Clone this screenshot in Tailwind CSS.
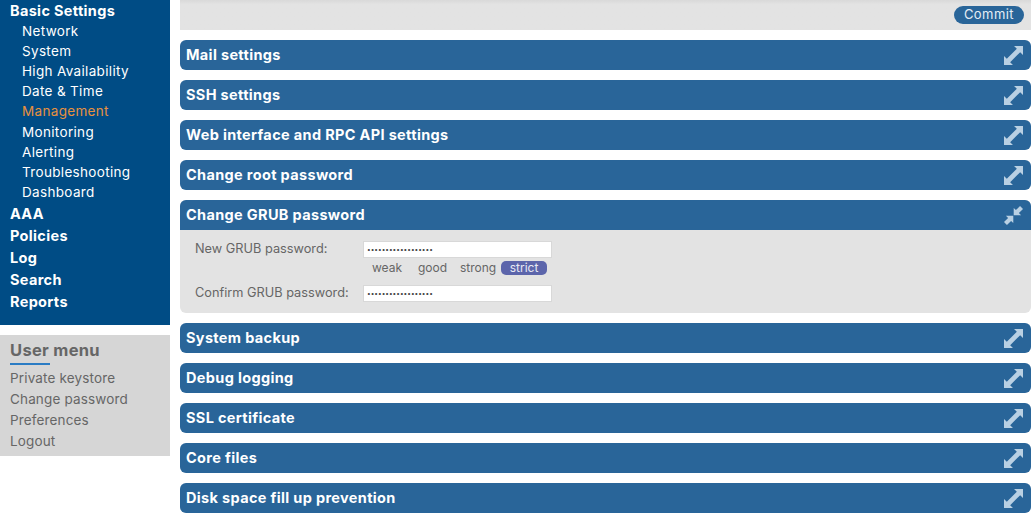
<!DOCTYPE html>
<html lang="en">
<head>
    <meta charset="UTF-8">
    <title>Management</title>
    <script src="https://cdn.jsdelivr.net/npm/@tailwindcss/browser@4"></script>
</head>
<body class="h-[513px] overflow-hidden bg-white font-['Inter','Noto_Sans',sans-serif] text-[13.5px] text-[#666]">
<div class="flex items-start gap-[10px]">
    <!-- Sidebar -->
    <aside class="w-[170px] shrink-0">
        <nav class="h-[325px] bg-[#004c85] pl-[10px] tracking-[0.33px] text-white">
            <div class="flex h-[21.1px] items-center text-[14.5px] font-bold">Basic Settings</div>
            <ul class="mb-[0.7px] pl-3">
                <li class="flex h-[20.1px] items-center">Network</li>
                <li class="flex h-[20.1px] items-center">System</li>
                <li class="flex h-[20.1px] items-center">High Availability</li>
                <li class="flex h-[20.1px] items-center">Date &amp; Time</li>
                <li class="flex h-[20.1px] items-center text-[#e8913f]">Management</li>
                <li class="mt-[0.2px] flex h-[20.1px] items-center">Monitoring</li>
                <li class="flex h-[20.1px] items-center">Alerting</li>
                <li class="flex h-[20.1px] items-center">Troubleshooting</li>
                <li class="flex h-[20.1px] items-center">Dashboard</li>
            </ul>
            <div class="flex h-[22px] items-center text-[14.5px] font-bold">AAA</div>
            <div class="flex h-[22px] items-center text-[14.5px] font-bold">Policies</div>
            <div class="flex h-[22px] items-center text-[14.5px] font-bold">Log</div>
            <div class="flex h-[22px] items-center text-[14.5px] font-bold">Search</div>
            <div class="flex h-[22px] items-center text-[14.5px] font-bold">Reports</div>
        </nav>
        <div class="mt-[10px] h-[121px] bg-[#d6d6d6] pt-[5px]">
            <div class="ml-[10px] flex h-[20px] items-center text-[16.5px] font-bold tracking-[0.3px]">User menu</div>
            <div class="ml-[10px] mt-[3px] h-[2px] w-[40px] bg-[#2a7cc4]"></div>
            <ul class="mt-[3px] pl-[10px] tracking-[0.15px]">
                <li class="flex h-[21px] items-center">Private keystore</li>
                <li class="flex h-[21px] items-center">Change password</li>
                <li class="flex h-[21px] items-center">Preferences</li>
                <li class="flex h-[21px] items-center">Logout</li>
            </ul>
        </div>
    </aside>

    <!-- Main -->
    <main class="flex min-w-0 flex-1 flex-col gap-[10px]">
        <div class="flex h-[30px] items-center justify-end bg-[#e3e3e3] bg-linear-to-b from-[#d9d9d9] to-[#e3e3e3] to-[15%]">
            <button class="mr-[7px] flex h-[18px] w-[70px] items-center justify-center rounded-full bg-[#296599] text-[13px] tracking-[0.45px] text-[#e4edf5]">Commit</button>
        </div>

        <section class="flex h-[30px] items-center justify-between rounded-md bg-[#296599] pl-[6px] pr-[8px] text-[14.5px] font-bold tracking-[0.34px] text-white">
            <span>Mail settings</span>
            <svg class="size-[19px] text-[#b9d0e3]" viewBox="0 0 18 18" fill="currentColor"><path d="M9.5 0H18V8.5L15.34 5.84 5.84 15.34 8.5 18H0V9.5L2.66 12.16 12.16 2.66z"/></svg>
        </section>
        <section class="flex h-[30px] items-center justify-between rounded-md bg-[#296599] pl-[6px] pr-[8px] text-[14.5px] font-bold tracking-[0.34px] text-white">
            <span>SSH settings</span>
            <svg class="size-[19px] text-[#b9d0e3]" viewBox="0 0 18 18" fill="currentColor"><path d="M9.5 0H18V8.5L15.34 5.84 5.84 15.34 8.5 18H0V9.5L2.66 12.16 12.16 2.66z"/></svg>
        </section>
        <section class="flex h-[30px] items-center justify-between rounded-md bg-[#296599] pl-[6px] pr-[8px] text-[14.5px] font-bold tracking-[0.34px] text-white">
            <span>Web interface and RPC API settings</span>
            <svg class="size-[19px] text-[#b9d0e3]" viewBox="0 0 18 18" fill="currentColor"><path d="M9.5 0H18V8.5L15.34 5.84 5.84 15.34 8.5 18H0V9.5L2.66 12.16 12.16 2.66z"/></svg>
        </section>
        <section class="flex h-[30px] items-center justify-between rounded-md bg-[#296599] pl-[6px] pr-[8px] text-[14.5px] font-bold tracking-[0.34px] text-white">
            <span>Change root password</span>
            <svg class="size-[19px] text-[#b9d0e3]" viewBox="0 0 18 18" fill="currentColor"><path d="M9.5 0H18V8.5L15.34 5.84 5.84 15.34 8.5 18H0V9.5L2.66 12.16 12.16 2.66z"/></svg>
        </section>

        <!-- Open panel -->
        <section class="h-[113px] rounded-md bg-[#e3e3e3]">
            <div class="flex h-[30px] items-center justify-between rounded-t-md bg-[#296599] pl-[6px] pr-[8px] text-[14.5px] font-bold tracking-[0.34px] text-white">
                <span>Change GRUB password</span>
                <svg class="size-[19px] text-[#b9d0e3]" viewBox="0 0 18 18" fill="currentColor"><path d="M9.2 1.8V8.8H16.2L14.11 6.71 18 2.81 15.19 0 11.29 3.89zM8.8 16.2V9.2H1.8L3.89 11.29 0 15.19 2.81 18 6.71 14.11z"/></svg>
            </div>
            <div class="pl-[15px] pt-[11px] text-[12.75px]">
                <div class="flex h-[17px] items-center">
                    <label class="w-[168px] pb-[2px]">New GRUB password:</label>
                    <input type="password" value="xxxxxxxxxxxxxxxxxx" class="h-[17px] w-[189px] border border-[#d8d8d8] bg-white px-[3px] text-[6.5px] text-[#444]">
                </div>
                <div class="ml-[168px] mt-[3px] flex h-[14px] items-center text-[12px]">
                    <span class="w-[46px] pl-[9px]">weak</span>
                    <span class="w-[42px] pl-[9px]">good</span>
                    <span class="w-[50px] pl-[9px]">strong</span>
                    <span class="flex h-[14px] w-[46px] items-center justify-center rounded-[5px] bg-[#5c65ab] text-[#e8e9f4]">strict</span>
                </div>
                <div class="mt-[10px] flex h-[17px] items-center">
                    <label class="w-[168px] pb-[2px]">Confirm GRUB password:</label>
                    <input type="password" value="xxxxxxxxxxxxxxxxxx" class="h-[17px] w-[189px] border border-[#d8d8d8] bg-white px-[3px] text-[6.5px] text-[#444]">
                </div>
            </div>
        </section>

        <section class="flex h-[30px] items-center justify-between rounded-md bg-[#296599] pl-[6px] pr-[8px] text-[14.5px] font-bold tracking-[0.34px] text-white">
            <span>System backup</span>
            <svg class="size-[19px] text-[#b9d0e3]" viewBox="0 0 18 18" fill="currentColor"><path d="M9.5 0H18V8.5L15.34 5.84 5.84 15.34 8.5 18H0V9.5L2.66 12.16 12.16 2.66z"/></svg>
        </section>
        <section class="flex h-[30px] items-center justify-between rounded-md bg-[#296599] pl-[6px] pr-[8px] text-[14.5px] font-bold tracking-[0.34px] text-white">
            <span>Debug logging</span>
            <svg class="size-[19px] text-[#b9d0e3]" viewBox="0 0 18 18" fill="currentColor"><path d="M9.5 0H18V8.5L15.34 5.84 5.84 15.34 8.5 18H0V9.5L2.66 12.16 12.16 2.66z"/></svg>
        </section>
        <section class="flex h-[30px] items-center justify-between rounded-md bg-[#296599] pl-[6px] pr-[8px] text-[14.5px] font-bold tracking-[0.34px] text-white">
            <span>SSL certificate</span>
            <svg class="size-[19px] text-[#b9d0e3]" viewBox="0 0 18 18" fill="currentColor"><path d="M9.5 0H18V8.5L15.34 5.84 5.84 15.34 8.5 18H0V9.5L2.66 12.16 12.16 2.66z"/></svg>
        </section>
        <section class="flex h-[30px] items-center justify-between rounded-md bg-[#296599] pl-[6px] pr-[8px] text-[14.5px] font-bold tracking-[0.34px] text-white">
            <span>Core files</span>
            <svg class="size-[19px] text-[#b9d0e3]" viewBox="0 0 18 18" fill="currentColor"><path d="M9.5 0H18V8.5L15.34 5.84 5.84 15.34 8.5 18H0V9.5L2.66 12.16 12.16 2.66z"/></svg>
        </section>
        <section class="flex h-[30px] items-center justify-between rounded-md bg-[#296599] pl-[6px] pr-[8px] text-[14.5px] font-bold tracking-[0.34px] text-white">
            <span>Disk space fill up prevention</span>
            <svg class="size-[19px] text-[#b9d0e3]" viewBox="0 0 18 18" fill="currentColor"><path d="M9.5 0H18V8.5L15.34 5.84 5.84 15.34 8.5 18H0V9.5L2.66 12.16 12.16 2.66z"/></svg>
        </section>
    </main>
</div>
</body>
</html>
